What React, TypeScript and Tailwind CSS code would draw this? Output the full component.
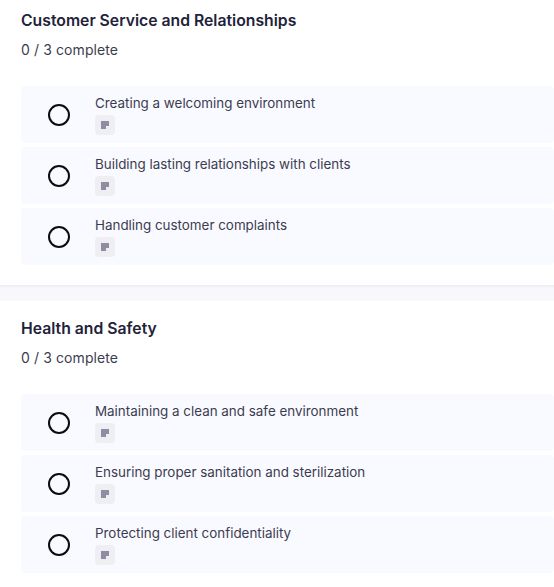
const sections = [
  {
    title: 'Customer Service and Relationships',
    items: ['Creating a welcoming environment', 'Building lasting relationships with clients', 'Handling customer complaints'],
  },
  {
    title: 'Health and Safety',
    items: ['Maintaining a clean and safe environment', 'Ensuring proper sanitation and sterilization', 'Protecting client confidentiality'],
  },
];

const NoteIcon = () => (
  <svg width="8" height="8" viewBox="0 0 8 8" className="block">
    <path d="M0 0H8V5H5V8H0Z" fill="#8f8da3" />
  </svg>
);

const Row = ({ label }: { label: string }) => (
  <div className="flex h-[57px] items-center rounded bg-[#f9faff]">
    <div className="ml-[27px] h-[22px] w-[22px] shrink-0 rounded-full border-2 border-[#0c0c10]" />
    <div className="ml-[25px] flex flex-col self-start pt-[8px]">
      <span className="text-[13.4px] leading-[19px] text-[#3c3c50]">{label}</span>
      <span className="mt-[2px] flex h-[20px] w-[20px] items-center justify-center rounded bg-[#eeeef3]">
        <NoteIcon />
      </span>
    </div>
  </div>
);

export default function App() {
  return (
    <div className="h-[587px] w-[554px] overflow-hidden bg-white font-['Inter',sans-serif]">
      {sections.map((section, i) => (
        <div key={section.title}>
          <div className={`pl-[21px] ${i === 0 ? 'pb-[20px] pt-[10px]' : 'pt-[17px]'}`}>
            <h2 className="text-[15.75px] font-semibold leading-[22px] text-[#22223a]">{section.title}</h2>
            <p className="mt-[8px] text-[14px] leading-[20px] tracking-[0.1px] text-[#3c3c50]">0 / 3 complete</p>
            <div className="mt-[26px] flex flex-col gap-[4px]">
              {section.items.map((item) => (
                <Row key={item} label={item} />
              ))}
            </div>
          </div>
          {i === 0 && <div className="h-[16px] bg-[#f8f8fc] shadow-[inset_0_3px_3px_-2px_rgba(30,30,60,0.08)]" />}
        </div>
      ))}
    </div>
  );
}
